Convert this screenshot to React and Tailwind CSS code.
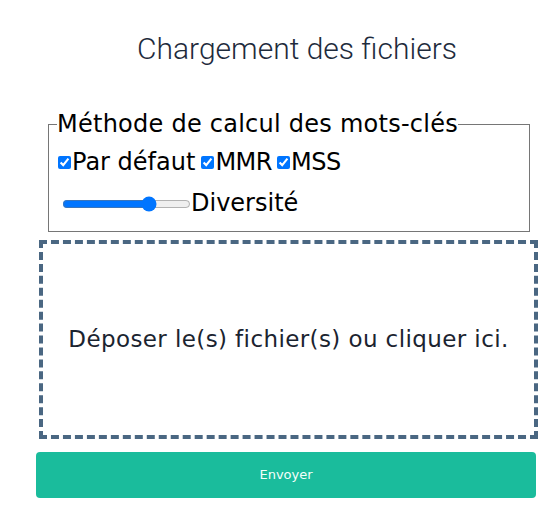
export default function App() {
  return (
    <div className="w-[550px] h-[510px] bg-white">
      <div className="w-[500px] ml-[36px] pt-[29px]">
        <h1 className="text-center pl-[22px] text-[30px] leading-[40px] font-light text-[#1e2b3c] font-['Roboto',sans-serif]">
          Chargement des fichiers
        </h1>

        <fieldset className="mt-[39px] ml-[12px] w-[482px] border border-[#767676] pl-[8px] pr-2 pb-[11px] font-['DejaVu_Sans',sans-serif] text-black">
          <legend className="text-[24px] leading-[33px] tracking-[0.25px] px-0">Méthode de calcul des mots-clés</legend>
          <div className="flex items-center text-[24px] leading-[33px] mt-[5px]">
            <label className="flex items-center">
              <input type="checkbox" defaultChecked className="w-[13px] h-[13px] mr-[1px] ml-[1px]" />
              Par défaut
            </label>
            <label className="flex items-center ml-[6px] tracking-[-0.5px]">
              <input type="checkbox" defaultChecked className="w-[13px] h-[13px] mr-[1px]" />
              MMR
            </label>
            <label className="flex items-center ml-[5px] tracking-[-0.5px]">
              <input type="checkbox" defaultChecked className="w-[13px] h-[13px] mr-[1px]" />
              MSS
            </label>
          </div>
          <div className="flex items-center text-[24px] leading-[33px] mt-[8px]">
            <input type="range" defaultValue={70} className="w-[129px] ml-[5px]" />
            Diversité
          </div>
        </fieldset>

        <div className="mt-[8px] ml-[3px] w-[499px] h-[199px] border-[4px] border-dashed border-[#4a6782] flex items-center justify-center font-['DejaVu_Sans',sans-serif] text-[23px] tracking-[0.4px] text-[#1b2430]">
          Déposer le(s) fichier(s) ou cliquer ici.
        </div>

        <button className="mt-[13px] w-[500px] h-[46px] rounded-[4px] bg-[#1abc9c] text-[#f4fffb] text-[13px] font-['DejaVu_Sans',sans-serif]">
          Envoyer
        </button>
      </div>
    </div>
  );
}
